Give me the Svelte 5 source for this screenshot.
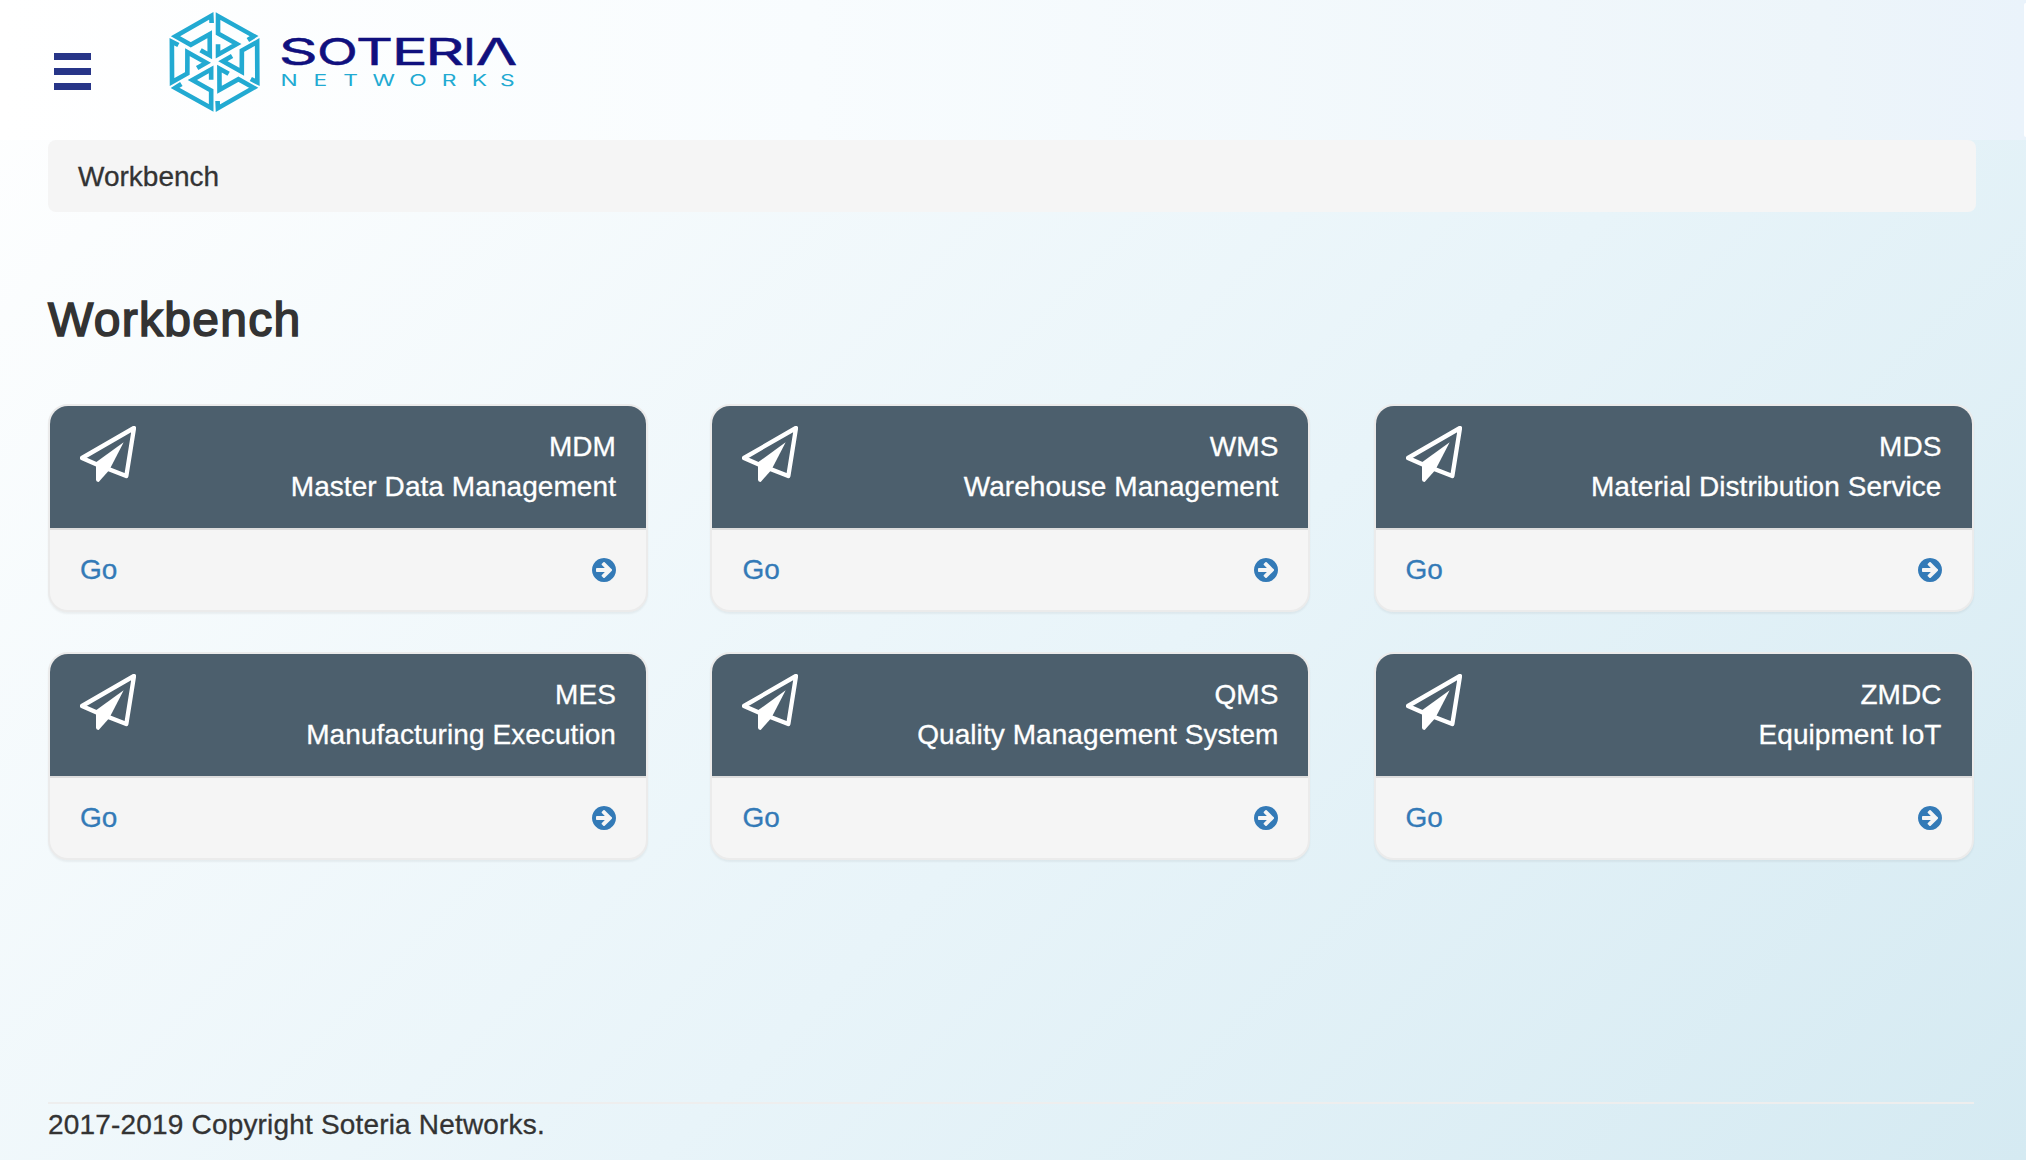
<script>
  const modules = [
    { code: 'MDM', name: 'Master Data Management' },
    { code: 'WMS', name: 'Warehouse Management' },
    { code: 'MDS', name: 'Material Distribution Service' },
    { code: 'MES', name: 'Manufacturing Execution' },
    { code: 'QMS', name: 'Quality Management System' },
    { code: 'ZMDC', name: 'Equipment IoT' }
  ];
  const turns = [0, 60, 120, 180, 240, 300];
  // Wordmark letters: start and advance of each one
  const brand = [
    ['S', 118.7, 39], ['O', 157.1, 40.8], ['T', 196, 37], ['E', 231.7, 36],
    ['R', 265.3, 39], ['I', 303, 13], ['Λ', 315.7, 41.5]
  ];
</script>

<div class="page">
  <header>
    <button class="menu" aria-label="Menu"><span></span><span></span><span></span></button>
    <svg class="logo" width="370" height="120" viewBox="0 0 370 120" role="img" aria-label="Soteria Networks">
      <g transform="translate(54.6 62) scale(0.343 0.3333)" class="mark">
        {#each turns as turn}
          <path transform="rotate({turn})" d="M10-53V-22L65-54L10-86V-137.5L115-77.5L97-66" />
        {/each}
      </g>
      <text class="brand" y="64.6">{#each brand as [ch, x, len]}<tspan {x} textLength={len} lengthAdjust="spacingAndGlyphs">{ch}</tspan>{/each}</text>
      <text class="sub" transform="translate(0 86) scale(1.4 1)" x="86 109.7 130.9 151.8 178 201.2 222.7 242.8" y="0">NETWORKS</text>
    </svg>
    <span class="handle"></span>
  </header>

  <main>
    <nav class="crumbs">Workbench</nav>
    <h1>Workbench</h1>
    <section class="grid">
      {#each modules as m}
        <article class="card">
          <div class="top">
            <svg class="plane" viewBox="0 0 168 168">
              <path class="line" d="M54 117L6 96L162 6L139 150L85 129" />
              <path class="fill" d="M131 49L48 109V162Q49 168 56 168L88 132Z" />
            </svg>
            <div class="label"><div>{m.code}</div><div>{m.name}</div></div>
          </div>
          <a class="go" href="#go">
            <span>Go</span>
            <svg viewBox="128 128 1536 1536"><path d="M1413 896q0-27-18-45l-91-91-362-362q-18-18-45-18t-45 18l-91 91q-18 18-18 45t18 45l189 189h-502q-26 0-45 19t-19 45v128q0 26 19 45t45 19h502l-189 189q-19 19-19 45t19 45l91 91q18 18 45 18t45-18l362-362 91-91q18-18 18-45zm251 0q0 209-103 385.5t-279.5 279.5-385.5 103-385.5-103-279.5-279.5-103-385.5 103-385.5 279.5-279.5 385.5-103 385.5 103 279.5 279.5 103 385.5z" /></svg>
          </a>
        </article>
      {/each}
    </section>
  </main>

  <footer>2017-2019 Copyright Soteria Networks.</footer>
</div>

<style>
  :global(body) { margin: 0; }
  .page {
    box-sizing: border-box;
    width: 2026px;
    height: 1160px;
    display: flex;
    flex-direction: column;
    overflow: hidden;
    background: linear-gradient(135deg, #fff 0%, #e8f4f9 57%, #d5eaf2 100%);
    color: #333;
    font: 28px/40px "Liberation Sans", Arial, sans-serif;
    -webkit-text-stroke: 0.3px currentColor;
  }
  header {
    position: relative;
    flex: none;
    display: flex;
    align-items: flex-start;
    height: 140px;
    background: linear-gradient(90deg, #fff 0%, #f8fcfe 40%, #edf5fa 90%, #eaf3fb 100%);
  }
  .menu {
    display: flex;
    flex-direction: column;
    gap: 8px;
    margin: 53px 0 0 54px;
    padding: 0;
    border: 0;
    background: none;
  }
  .menu span { width: 37px; height: 7px; background: #273588; }
  .logo { margin-left: 69px; -webkit-text-stroke: 0; }
  .mark { fill: none; stroke: #22aad2; stroke-width: 13.5; stroke-miterlimit: 6; }
  .brand { font: 400 37.2px Inter, sans-serif; fill: #10107e; stroke: #10107e; stroke-width: 0.5px; }
  .sub { font: 400 16.3px Inter, sans-serif; fill: #22aad2; }
  .handle {
    position: absolute;
    right: 0;
    top: 3px;
    width: 2px;
    height: 134px;
    border-radius: 2px 0 0 2px;
    background: #fff;
  }
  main { flex: 1; padding: 0 50px 0 48px; }
  .crumbs {
    box-sizing: border-box;
    height: 72px;
    padding: 17px 30px 15px;
    border-radius: 8px;
    background: #f5f5f5;
  }
  h1 {
    margin: 81px 0 57px;
    font-size: 48px;
    line-height: 54px;
    font-weight: 400;
    letter-spacing: 1.3px;
    -webkit-text-stroke: 1.6px #333;
  }
  .grid {
    display: grid;
    grid-template-columns: 662.45px 663.1px 600px;
    row-gap: 40px;
  }
  .card {
    box-sizing: border-box;
    width: 600px;
    height: 208px;
    border: 2px solid #ebebeb;
    border-radius: 20px;
    background: #f5f5f5;
    overflow: hidden;
    box-shadow: 0 2px 2px rgba(0, 0, 0, 0.05);
  }
  .top {
    box-sizing: border-box;
    display: flex;
    justify-content: space-between;
    height: 124px;
    padding: 20px 30px;
    border-bottom: 2px solid #ddd;
    background: #4c5f6d;
    color: #fff;
  }
  .plane { width: 56px; height: 56px; }
  .line { fill: none; stroke: #fff; stroke-width: 13; stroke-linejoin: round; }
  .fill { fill: #fff; }
  .label { padding-top: 1px; text-align: right; letter-spacing: 0.07px; }
  .go {
    display: flex;
    justify-content: space-between;
    align-items: center;
    height: 80px;
    padding: 0 30px;
    color: #337ab7;
    text-decoration: none;
  }
  .go svg { width: 24px; height: 24px; fill: #337ab7; }
  footer {
    flex: none;
    box-sizing: border-box;
    height: 58px;
    margin: 0 52px 0 48px;
    padding-top: 1px;
    border-top: 2px solid #eee;
    letter-spacing: 0.18px;
  }
</style>
